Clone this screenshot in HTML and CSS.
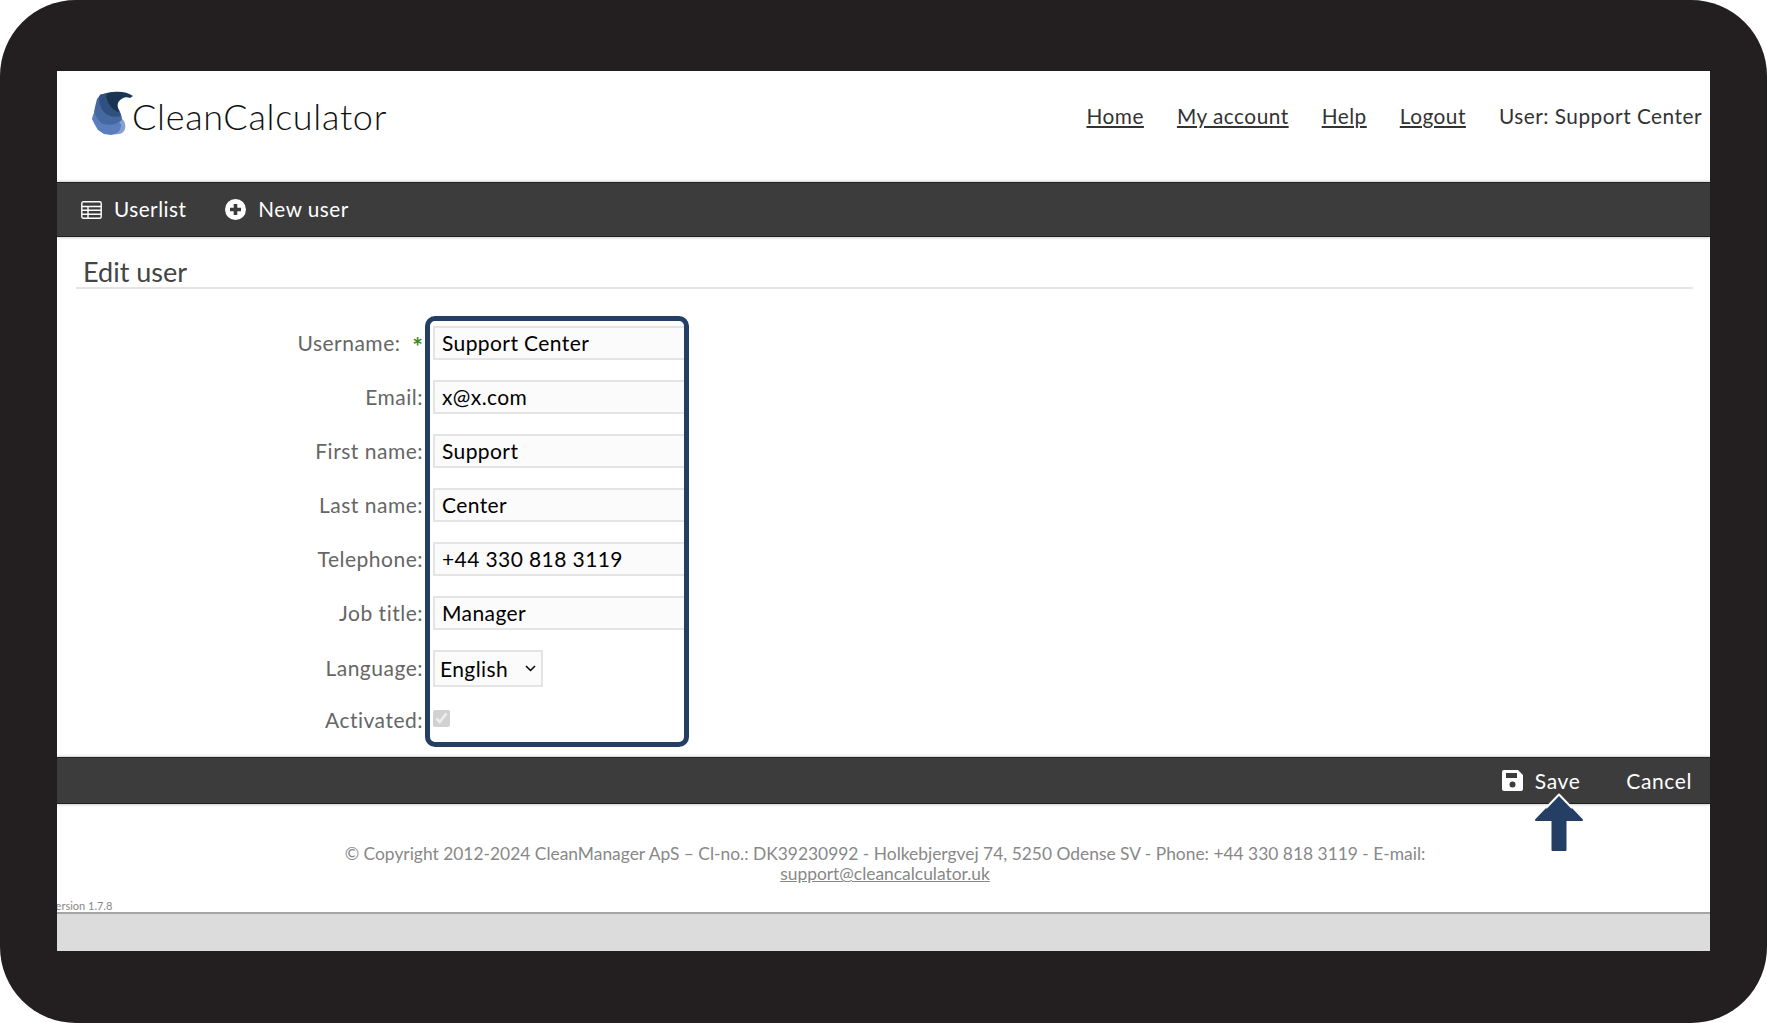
FILE: index.html
```html
<!DOCTYPE html>
<html lang="en">
<head>
<meta charset="utf-8">
<title>Edit user - CleanCalculator</title>
<link rel="stylesheet" href="styles.css">
</head>
<body>
<div class="frame">
  <div class="screen">
    <header class="header">
      <div class="brand">
        <svg class="logo" viewBox="0 0 41 44" width="41" height="44">
          <path fill="#86a0d2" d="M12 28 C18 22 28 24 32 30 C35 36 33 42 27 43 C22 44 16 43 12 41Z"/>
          <path fill="#5a7dbd" d="M1 24 L0 28 L3 34 L6 39 L12 43 L19 44 C25 43 29 40 29 34 C26 27 20 24 14 22 L6 14Z"/>
          <path fill="#44689f" d="M3 16 L2 21 L5 27 L9 32 C16 35 24 34 30 29 C30 25 28 20 26 17 L22 8 L9 3 L5 8Z"/>
          <path fill="#30507f" d="M7 6 L8 4 L14 2 L21 1 L24 4 L24 12 L27 20 L29 25 C22 27 15 25 11 20 C8 16 7 11 7 6Z"/>
          <path fill="#1a3553" d="M14 5 L16 2 L21 1 C28 0 36 1 41 5 L38 7 C33 5 28 8 26 12 C25 15 26 18 27 21 C21 20 16 14 14 5Z"/>
        </svg>
        <span class="brand-name">CleanCalculator</span>
      </div>
      <nav class="nav">
        <a href="#">Home</a>
        <a href="#">My account</a>
        <a href="#">Help</a>
        <a href="#">Logout</a>
        <span>User: Support Center</span>
      </nav>
    </header>

    <div class="toolbar">
      <span class="tool">
        <svg viewBox="0 0 21 18" width="21" height="18" fill="none" stroke="#fff" stroke-width="1.4">
          <rect x="0.8" y="0.8" width="19.4" height="16.4" rx="1.5"/>
          <path d="M0.8 5.5H20.2M0.8 9.3H20.2M0.8 13.2H20.2M7 5.5V17.2"/>
        </svg>
        <span class="tool-text">Userlist</span>
      </span>
      <span class="tool">
        <svg viewBox="0 0 21 21" width="21" height="21">
          <circle cx="10.5" cy="10.5" r="10.5" fill="#fff"/>
          <path d="M10.5 5V16M5 10.5H16" stroke="#3c3c3c" stroke-width="3.6"/>
        </svg>
        <span class="tool-text">New user</span>
      </span>
    </div>

    <main class="content">
      <h1 class="title">Edit user</h1>
      <form class="form">
        <label class="lbl">Username: <b class="req">*</b></label><input class="field" value="Support Center">
        <label class="lbl">Email:</label><input class="field" value="x@x.com">
        <label class="lbl">First name:</label><input class="field" value="Support">
        <label class="lbl">Last name:</label><input class="field" value="Center">
        <label class="lbl">Telephone:</label><input class="field" value="+44 330 818 3119">
        <label class="lbl">Job title:</label><input class="field" value="Manager">
        <label class="lbl lbl-lang">Language:</label>
        <select class="pick"><option>English</option></select>
        <label class="lbl lbl-check">Activated:</label><input class="check" type="checkbox" checked disabled>
      </form>
    </main>

    <div class="actionbar">
      <span class="tool">
        <svg viewBox="0 0 21 21" width="21" height="21">
          <path fill="#fff" fill-rule="evenodd" d="M2 0H16L21 5V19A2 2 0 0 1 19 21H2A2 2 0 0 1 0 19V2A2 2 0 0 1 2 0ZM4 3V8H15V3ZM10.5 11.5A3 3 0 1 0 10.5 17.5A3 3 0 1 0 10.5 11.5Z"/>
        </svg>
        <span>Save</span>
      </span>
      <span class="tool">Cancel</span>
    </div>

    <footer class="footer">
      <p class="copy">© Copyright 2012-2024 CleanManager ApS – Cl-no.: DK39230992 - Holkebjergvej 74, 5250 Odense SV - Phone: +44 330 818 3119 - E-mail:<br><a href="#">support@cleancalculator.uk</a></p>
      <div class="version">Version 1.7.8</div>
    </footer>
    <div class="tail"></div>

    <div class="highlight"></div>
    <svg class="arrow" viewBox="0 0 54 60" width="54" height="60">
      <path fill="#243f63" stroke="#243f63" stroke-width="2" stroke-linejoin="round" d="M27 3 L50 27 H33.5 V57 H20.5 V27 H4Z"/>
      <path fill="none" stroke="#fff" stroke-width="2" stroke-linejoin="round" d="M14 15 L27 1.5 L40 15"/>
    </svg>
  </div>
</div>
</body>
</html>
```
FILE: styles.css
```css
* { box-sizing: border-box; }
html, body { margin: 0; height: 100%; background: #fff; }
body { font-family: "Lato", "Open Sans", sans-serif; color: #333; overflow: hidden; }

.frame {
  width: 1767px;
  height: 1023px;
  background: #231f20;
  border-radius: 76px;
  padding: 71px 57px 72px;
}
.screen {
  position: relative;
  height: 880px;
  width: 1653px;
  background: #fff;
  display: flex;
  flex-direction: column;
  overflow: hidden;
}

.header {
  height: 110px;
  flex: none;
  display: flex;
  justify-content: space-between;
  align-items: flex-start;
  padding: 20px 8px 0 35px;
}
.brand { display: flex; align-items: flex-start; }
.logo { flex: none; }
.brand-name {
  font-size: 36px;
  font-weight: 300;
  color: #111;
  line-height: 44px;
  margin: 3px 0 0 -1px;
  letter-spacing: 0.7px;
}
.nav { display: flex; gap: 33px; font-size: 20.8px; line-height: 24px; padding-top: 13px; letter-spacing: 0.5px; }
.nav a { color: #333; text-decoration: underline; }

.toolbar, .actionbar {
  flex: none;
  background: #3c3c3c;
  color: #fff;
  display: flex;
  align-items: center;
  letter-spacing: 0.5px;
  border-top: 1px solid #222;
  border-bottom: 1px solid #222;
  box-shadow: 0 0 3px rgba(0,0,0,.35);
}
.toolbar { height: 55px; margin-top: 1px; padding-left: 24px; gap: 39px; font-size: 20.7px; }
.actionbar { height: 47px; justify-content: flex-end; padding-right: 18px; gap: 46px; font-size: 21px; letter-spacing: 0.6px; }
.tool { display: flex; align-items: center; gap: 12px; }
.tool-text { margin-top: -1px; }

.content { flex: 1; min-height: 0; padding: 0 17px 0 19px; }
.title {
  margin: 0;
  height: 52px;
  padding: 20px 0 0 7px;
  font-size: 27px;
  line-height: 30px;
  font-weight: 400;
  color: #444;
  border-bottom: 2px solid #e4e4e4;
}
.form {
  display: grid;
  grid-template-columns: 347px 254px;
  grid-auto-rows: 34px;
  row-gap: 20px;
  column-gap: 10px;
  padding-top: 37px;
  font-size: 21px;
  letter-spacing: 0.4px;
}
.lbl { text-align: right; color: #666; line-height: 34px; letter-spacing: 0.5px; }
.req { display: inline-block; color: #3c8a1e; font-size: 25px; line-height: 20px; font-weight: 700; margin-left: 6px; vertical-align: -5px; letter-spacing: 0; }
.field {
  width: 254px;
  height: 34px;
  padding: 0 7px 2px;
  border: 2px solid #e4e4e4;
  border-right: 0;
  background: #fbfbfb;
  font: inherit;
  letter-spacing: inherit;
  color: #000;
}
.pick {
  width: 110px;
  height: 37px;
  padding: 0 0 0 5px;
  font: inherit;
  letter-spacing: inherit;
  color: #000;
  appearance: none;
  background: #fbfbfb url("data:image/svg+xml,%3Csvg xmlns='http://www.w3.org/2000/svg' width='11' height='7'%3E%3Cpath d='M1 1l4.5 4.5L10 1' fill='none' stroke='%23000' stroke-width='1.5'/%3E%3C/svg%3E") no-repeat right 5px center;
  border: 2px solid #e4e4e4;
}
.check { margin: 6px 0 0; width: 17px; height: 17px; }
.lbl-lang { margin-top: 1px; }
.lbl-check { margin-top: 6px; line-height: 20px; height: 20px; }

.footer { flex: none; height: 108px; position: relative; color: #888; font-size: 17.4px; text-align: center; }
.copy { margin: 40px 0 0; line-height: 20px; padding: 0 24px 0 27px; }
.copy a { color: #888; text-decoration: underline; }
.version { position: absolute; left: -8px; bottom: 0; font-size: 11px; line-height: 12px; color: #888; }
.tail {
  flex: none;
  height: 39px;
  background: #dcdcdc;
  border-top: 2px solid #a5a5a5;
}

.highlight {
  position: absolute;
  left: 368px;
  top: 245px;
  width: 264px;
  height: 431px;
  border: 5px solid #243f63;
  border-radius: 10px;
}
.arrow { position: absolute; left: 1475px; top: 722px; }
```
